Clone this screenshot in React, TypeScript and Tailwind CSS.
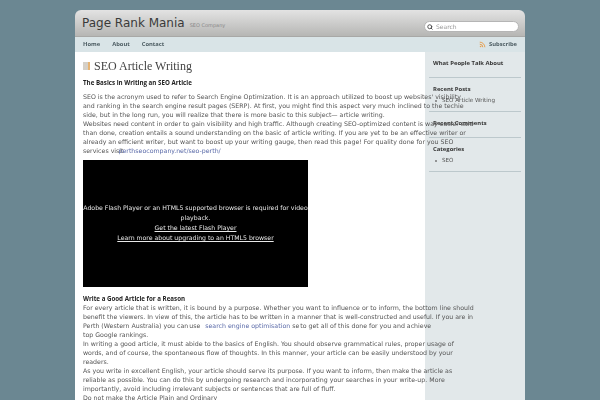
import { Rss, Search } from "lucide-react"

const sans = "font-['DejaVu_Sans',sans-serif]"
const narrow = "font-['Open_Sans',sans-serif]"

function Widget({ title, items }: { title: string; items?: string[] }) {
  return (
    <div className={`border-b border-[#bcc8cc] mb-[7px] mx-[4px] px-[4px] ${items ? "pb-[6px]" : "pb-[9px]"}`}>
      <h3 className={`${narrow} text-[5.9px] leading-[9px] font-bold text-[#333]`}>{title}</h3>
      {items && (
        <ul className="mt-[2px]">
          {items.map((item) => (
            <li key={item} className={`${sans} flex items-center gap-[5px] pl-[2px] text-[5.6px] leading-[9px] text-[#555]`}>
              <span className="w-[2px] h-[2px] rounded-full bg-[#777]" />
              {item}
            </li>
          ))}
        </ul>
      )}
    </div>
  )
}

export default function App() {
  return (
    <div className={`h-[400px] overflow-hidden bg-[#6b8792] pt-[10px] ${sans}`}>
      <div className="w-[450px] mx-auto rounded-t-[6px] overflow-hidden blur-[0.3px]">
        {/* Header */}
        <div className="h-[27px] flex justify-between pl-[7px] pr-[6px] bg-gradient-to-b from-[#e3e3e3] to-[#b6b6b4] border-b border-[#a8a8a6]">
          <div className="flex items-baseline gap-[5px] pt-[5px]">
            <span className="text-[12px] leading-[16px] text-[#3a3a3a]">Page Rank Mania</span>
            <span className="text-[5px] text-[#888]">SEO Company</span>
          </div>
          <div className="mt-[11px] w-[95px] h-[11px] rounded-full bg-white border border-[#b5b5b5] flex items-center pl-[2px] gap-[3px]">
            <Search className="w-[6px] h-[6px] text-[#444]" strokeWidth={3.5} />
            <span className="text-[6px] text-[#999]">Search</span>
          </div>
        </div>

        {/* Nav */}
        <div className={`${narrow} h-[15px] bg-[#d9e4e7] flex items-center justify-between px-[8px] text-[5.8px] font-bold text-[#4a5a60]`}>
          <div className="flex gap-[12px]">
            <span>Home</span>
            <span>About</span>
            <span>Contact</span>
          </div>
          <div className="flex items-center gap-[3px]">
            <Rss className="w-[7px] h-[7px] text-[#e8963c]" strokeWidth={3} />
            <span>Subscribe</span>
          </div>
        </div>

        <div className="flex h-[350px]">
          {/* Main column, its text runs out over the sidebar */}
          <div className="w-[350px] shrink-0 bg-white pl-[8px] pt-[7px] relative z-10 text-[#555] text-[6.25px] leading-[9px] whitespace-nowrap">
            <div className="flex items-center gap-[4px] h-[14px]">
              <svg width="7" height="8" viewBox="0 0 7 8">
                <rect width="5" height="8" fill="#d5d0c8" />
                <rect x="5" width="2" height="8" fill="#e6b474" />
              </svg>
              <h1 className="font-['Liberation_Serif',serif] text-[12px] text-[#444]">SEO Article Writing</h1>
            </div>

            <h2 className={`${narrow} mt-[5px] text-[6.2px] font-bold text-[#222]`}>The Basics in Writing an SEO Article</h2>

            <p className="mt-[5px]">
              SEO is the acronym used to refer to Search Engine Optimization. It is an approach utilized to boost up websites' visibility<br />
              and ranking in the search engine result pages (SERP). At first, you might find this aspect very much inclined to the techie<br />
              side, but in the long run, you will realize that there is more basic to this subject— article writing.<br />
              Websites need content in order to gain visibility and high traffic. Although creating SEO-optimized content is way easier said<br />
              than done, creation entails a sound understanding on the basic of article writing. If you are yet to be an effective writer or<br />
              already an efficient writer, but want to boost up your writing gauge, then read this page! For quality done for you SEO<br />
              services visit<span className="ml-[-5px] text-[#5a6aa8]">perthseocompany.net/seo-perth/</span>
            </p>

            {/* Video placeholder */}
            <div className="mt-[5px] w-[225px] h-[127px] bg-black text-[#e8e8e8] text-center flex flex-col justify-center pb-[1px] text-[6.2px] leading-[10px]">
              <p>Adobe Flash Player or an HTML5 supported browser is required for video<br />playback.</p>
              <p className="underline">Get the latest Flash Player </p>
              <p className="underline">Learn more about upgrading to an HTML5 browser</p>
            </div>

            <h2 className={`${narrow} mt-[7px] text-[6.2px] font-bold text-[#222]`}>Write a Good Article for a Reason</h2>
            <p>
              For every article that is written, it is bound by a purpose. Whether you want to influence or to inform, the bottom line should<br />
              benefit the viewers. In view of this, the article has to be written in a manner that is well-constructed and useful. If you are in<br />
              Perth (Western Australia) you can<span className="ml-[-1px]"> use</span> <span className="ml-[3px] text-[#5a6aa8]">search engine optimisation</span> se <span className="ml-[-1px]">to get</span> all of this done for you and achieve<br />
              top Google rankings.<br />
              In writing a good article, it must abide to the basics of English. You should observe grammatical rules, proper usage of<br />
              words, and of course, the spontaneous flow of thoughts. In this manner, your article can be easily understood by your<br />
              readers.<br />
              As you write in excellent English, your article should serve its purpose. If you want to inform, then make the article as<br />
              reliable as possible. You can do this by undergoing research and incorporating your searches in your write-up. More<br />
              importantly, avoid including irrelevant subjects or sentences that are full of fluff.<br />
              Do not make the Article Plain and Ordinary
            </p>
          </div>

          {/* Sidebar */}
          <aside className="w-[100px] bg-[#e2e8ea] pt-[7px]">
            <Widget title="What People Talk About" />
            <Widget title="Recent Posts" items={["SEO Article Writing"]} />
            <Widget title="Recent Comments" />
            <Widget title="Categories" items={["SEO"]} />
          </aside>
        </div>
      </div>
    </div>
  )
}
